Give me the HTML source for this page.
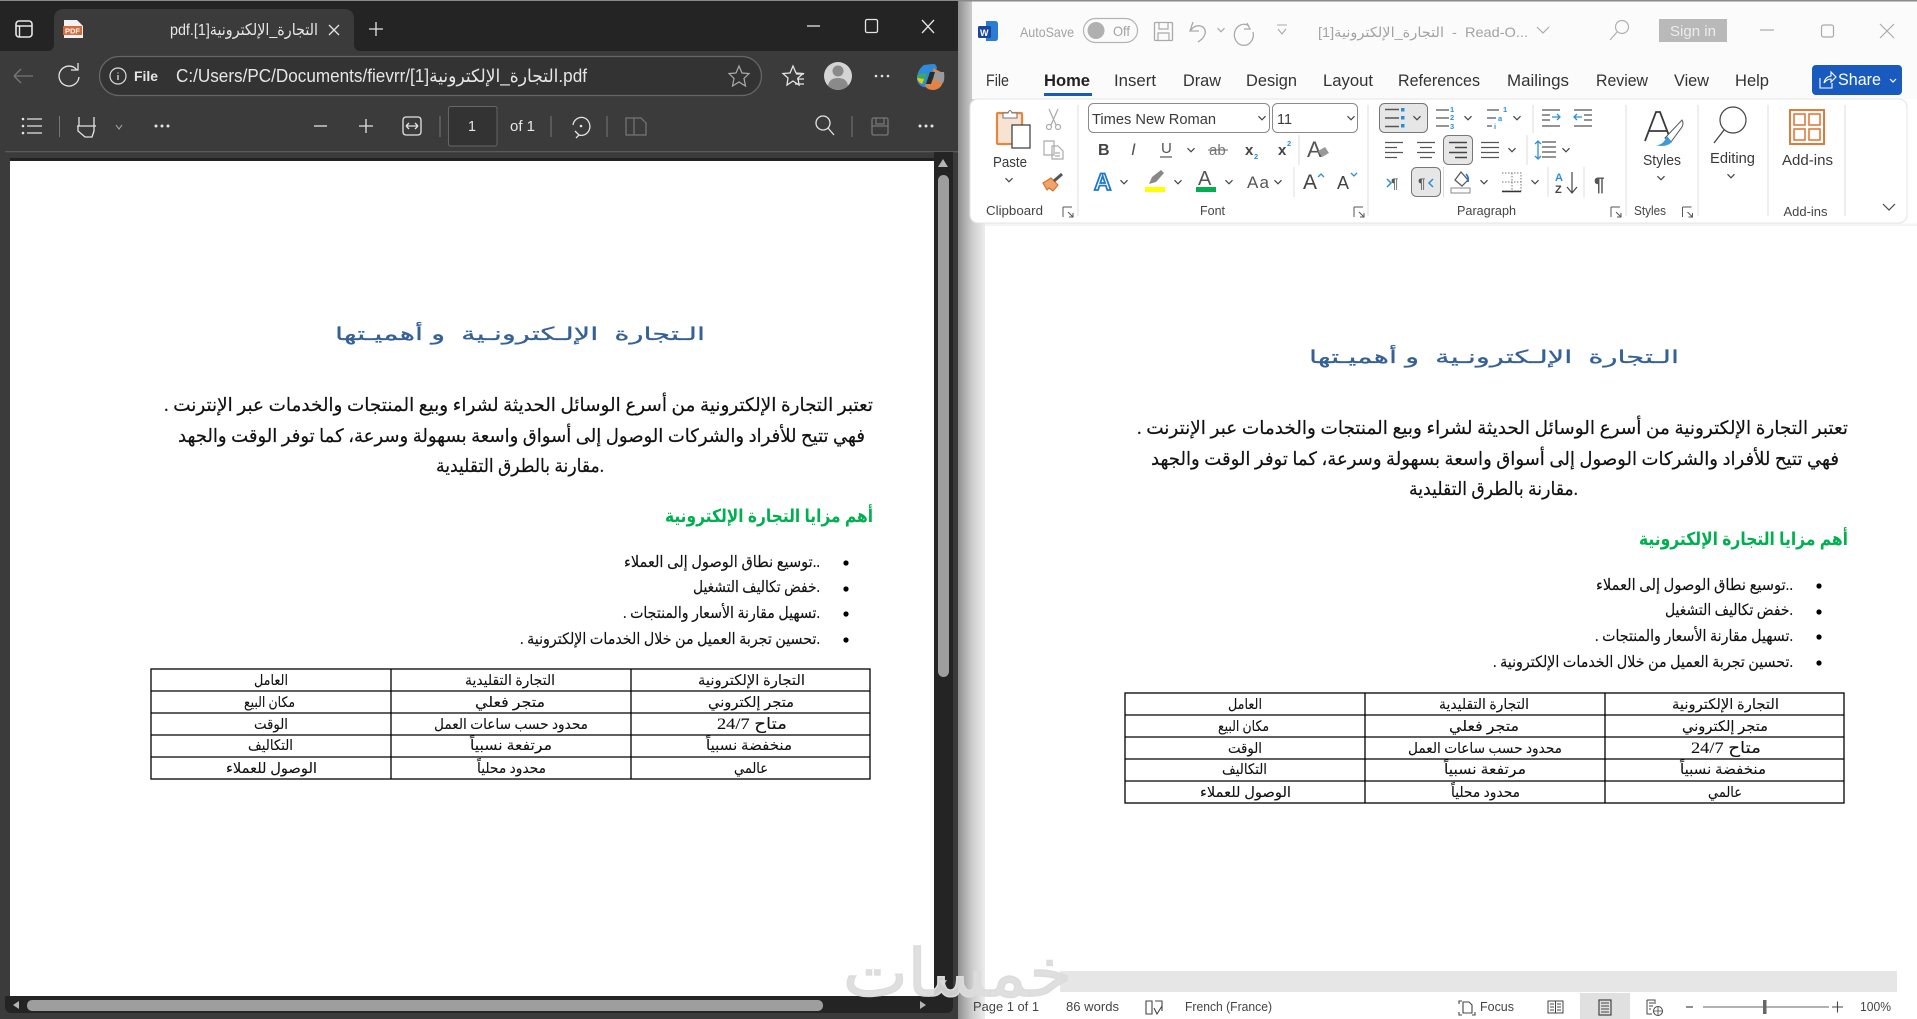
<!DOCTYPE html>
<html lang="en"><head><meta charset="utf-8"><title>PDF and Word</title>
<style>
html,body{margin:0;padding:0;width:1917px;height:1019px;overflow:hidden;background:#fff}
svg{display:block}
text{font-family:"Liberation Sans","DejaVu Sans",sans-serif;white-space:pre}
.d{fill:#e6e6e6;font-size:15px}
.r{fill:#3a3a3a;font-size:15px}
.t{fill:#333;font-size:16.5px}
.s{fill:#444;font-size:13px}
.g{fill:#a3a3a3;font-size:14px}
.b{fill:#111;font-size:18.5px;font-family:"Liberation Serif","DejaVu Sans",sans-serif;stroke:#111;stroke-width:.2}
.i{fill:#111;font-size:15.5px;font-family:"Liberation Serif","DejaVu Sans",sans-serif;stroke:#111;stroke-width:.15}
.c{fill:#111;font-size:14.5px;font-family:"Liberation Serif","DejaVu Sans",sans-serif;stroke:#111;stroke-width:.1}
.h{fill:#00b050;font-size:18px;font-weight:bold}
.ti{fill:#356196;font-size:18px;stroke:#356196;stroke-width:.25}
.ln{stroke:#555;stroke-width:1.2;fill:none}
.ic{stroke:#e4e4e4;stroke-width:1.3;fill:none}
.blue{fill:#2b8fd8;font-size:7.5px;font-weight:bold}
</style></head><body>
<svg xmlns="http://www.w3.org/2000/svg" width="1917" height="1019" viewBox="0 0 1917 1019">
<defs>
<linearGradient id="sh" x1="0" x2="1" y1="0" y2="0"><stop offset="0" stop-color="#8f8f8f"/><stop offset=".25" stop-color="#adadad"/><stop offset=".55" stop-color="#cfcfcf"/><stop offset="1" stop-color="#ececec"/></linearGradient>
<path id="ch" d="M-3.5-1.8L0 1.8L3.5-1.8" fill="none" stroke="#444" stroke-width="1.2"/>
<g id="launch"><path d="M-5-5H4M-5-5V5M0 0L5 5M5 1V5H1" fill="none" stroke="#555" stroke-width="1"/></g>
<g id="al"><path class="ln" d="M-9-7.5H9M-9-2.5H9M-9 2.5H9M-9 7.5H9"/></g>
<g id="all"><path class="ln" d="M-9-7.5H9M-9-2.5H3M-9 2.5H9M-9 7.5H3"/></g>
<g id="alc"><path class="ln" d="M-9-7.5H9M-6-2.5H6M-9 2.5H9M-6 7.5H6"/></g>
<g id="alr"><path d="M-9-7.5H9M-3-2.5H9M-9 2.5H9M-3 7.5H9" fill="none" stroke="#444" stroke-width="1.6"/></g>
</defs>

<!-- ======= backdrop ======= -->
<rect width="1917" height="1019" fill="#fff"/>
<rect x="958" y="0" width="959" height="99" fill="#fbfbfb"/>
<rect x="958" y="0" width="27" height="1019" fill="url(#sh)"/>
<rect x="972" y="0" width="945" height="99" fill="#fbfbfb"/>
<rect x="0" y="0" width="1917" height="1.5" fill="#8a8a8a"/>

<!-- ======= PDF WINDOW ======= -->
<rect x="0" y="1" width="958" height="1018" fill="#3b3b3b"/>
<rect x="0" y="1" width="958" height="50" fill="#242424"/>
<path d="M47 51Q54 51 54 44V19Q54 9 64 9H344Q354 9 354 19V44Q354 51 361 51Z" fill="#3b3b3b"/>
<!-- sidebar icon -->
<rect x="16" y="21" width="16" height="16" rx="3" fill="none" stroke="#e6e6e6" stroke-width="1.6"/>
<path d="M16 26H32M19.5 26V37" stroke="#e6e6e6" stroke-width="1.4" fill="none"/>
<!-- pdf icon -->
<path d="M64 20H77L83 26V38H64Z" fill="#f2f2f2"/>
<rect x="63" y="26" width="19" height="9" fill="#d9693a"/>
<text x="65" y="33.5" font-size="7" font-weight="bold" fill="#fff" textLength="15" lengthAdjust="spacingAndGlyphs">PDF</text>
<text class="d" x="170" y="35" font-size="16" textLength="148" lengthAdjust="spacingAndGlyphs" style="font-size:16px">pdf.[1]التجارة_الإلكترونية</text>
<path class="ic" d="M329 25L339 35M339 25L329 35" stroke-width="1.4"/>
<path class="ic" d="M376 22V36M369 29H383" stroke-width="1.5"/>
<path class="ic" d="M807 26H820"/><rect x="865.5" y="19.500" width="12" height="13" rx="1.5" class="ic"/><path class="ic" d="M922 20L934 33M934 20L922 33"/>

<!-- address row -->
<path d="M14 76H33M14 76L21 69M14 76L21 83" fill="none" stroke="#777" stroke-width="1.3"/>
<path class="ic" d="M77 70A10 10 0 1 0 79 77M78 63V70H71" stroke-width="1.5"/>
<rect x="99.500" y="56.500" width="662" height="39" rx="19.500" fill="#333" stroke="#666" stroke-width="1.3"/>
<circle cx="118" cy="76" r="8" fill="none" stroke="#ddd" stroke-width="1.2"/><path d="M118 72.500V73.500M118 75V80" stroke="#ddd" stroke-width="1.3"/>
<text class="d" x="134" y="81" textLength="24" lengthAdjust="spacingAndGlyphs" font-weight="bold" style="font-size:14px">File</text>
<text class="d" x="176" y="82" textLength="411" lengthAdjust="spacingAndGlyphs" style="font-size:18px">C:/Users/PC/Documents/fievrr/[1]التجارة_الإلكترونية.pdf</text>
<path d="M739 66L742 73L749 73.500L744 78.500L745.500 86L739 82L732.500 86L734 78.500L729 73.500L736 73Z" fill="none" stroke="#aaa" stroke-width="1.2"/>
<path class="ic" d="M793 66L796 73L803 73.500L798 78L799 85L793 81L787 85L788 78L783 73.500L790 73Z"/>
<path d="M796 74H804M797 79H804M795 84H804" stroke="#e4e4e4" stroke-width="1.3"/>
<ellipse cx="838" cy="76" rx="14" ry="14" fill="#d4d4d4"/>
<circle cx="838" cy="71" r="5.500" fill="#8a8a8a"/><path d="M828 86Q829 78 838 78Q847 78 848 86Q843 90 838 90Q833 90 828 86Z" fill="#8a8a8a"/>
<circle cx="876" cy="76" r="1.300" fill="#e4e4e4"/><circle cx="882" cy="76" r="1.300" fill="#e4e4e4"/><circle cx="888" cy="76" r="1.300" fill="#e4e4e4"/>
<!-- copilot -->
<path d="M932 64Q936 63 937 68L930 84Q928 88 923 87Q917 84 917 79Q917 70 924 65Z" fill="#2f8bd8"/>
<path d="M917 76Q920 72 927 74L924 84Q918 84 917 78Z" fill="#3aa76d"/>
<path d="M917 78L924 79L922 84Q918 82 917 78Z" fill="#e8c820"/>
<path d="M933 68L941 72Q945 74 943 82Q941 89 934 90Q926 90 925 85L930 81Q933 81 934 76Z" fill="#e0854a"/>
<path d="M935 72L944 72Q945 80 943 83L933 79Z" fill="#9a9a9a"/>
<path d="M930 72L935 72L931 84L926 84Z" fill="#2a2a2a"/>

<!-- pdf toolbar -->
<g fill="#e4e4e4"><circle cx="23" cy="119" r="1.300"/><circle cx="23" cy="126" r="1.300"/><circle cx="23" cy="133" r="1.300"/></g>
<path class="ic" d="M27 119H42M27 126H42M27 133H42"/>
<path d="M59.500 116V137" stroke="#777"/>
<path class="ic" d="M79 117V126H94V117M77 126H96M78 126V131L85 137H92L94 131V126"/>
<path d="M116 125L119 129L122 125" fill="none" stroke="#aaa" stroke-width="1"/>
<g fill="#e4e4e4"><circle cx="156" cy="126" r="1.500"/><circle cx="162" cy="126" r="1.500"/><circle cx="168" cy="126" r="1.500"/></g>
<path d="M314 126H327" stroke="#ccc" stroke-width="1.500"/>
<path class="ic" d="M366 119V133M359 126H373" stroke-width="1.500"/>
<rect x="403" y="117" width="18" height="18" rx="3" class="ic"/>
<path class="ic" d="M406 126H418M406 126L409 123M406 126L409 129M418 126L415 123M418 126L415 129" stroke-width="1.100"/>
<path d="M440 116V137" stroke="#777"/>
<rect x="448.500" y="106.500" width="48.500" height="39.500" rx="2" fill="#333" stroke="#666"/>
<text class="d" x="468" y="131" textLength="8" lengthAdjust="spacingAndGlyphs">1</text>
<text class="d" x="510" y="131" textLength="25" lengthAdjust="spacingAndGlyphs">of 1</text>
<path d="M551 116V137" stroke="#777"/>
<path class="ic" d="M573 125A8.500 9 0 1 1 579 135L575 131M579 135L576 138" stroke-width="1.400"/><circle cx="581" cy="126" r="1.300" fill="#e4e4e4"/>
<path d="M607 116V137" stroke="#777"/>
<path d="M626 118H634V135H626ZM634 118H641L646 123V135H634Z" fill="none" stroke="#777" stroke-width="1.200"/>
<circle cx="823" cy="123" r="7" class="ic" stroke-width="1.500"/><path class="ic" d="M828 128L834 135" stroke-width="1.500"/>
<path d="M852 116V137" stroke="#777"/>
<rect x="872" y="118" width="16" height="17" rx="1.500" fill="none" stroke="#777" stroke-width="1.300"/><path d="M872 126H888M876 118V124H884V118" fill="none" stroke="#777" stroke-width="1.200"/>
<g fill="#e4e4e4"><circle cx="920" cy="126" r="1.500"/><circle cx="926" cy="126" r="1.500"/><circle cx="932" cy="126" r="1.500"/></g>
<rect x="5" y="151" width="953" height="1.300" fill="#5a5a5a"/>

<!-- pdf viewport -->
<rect x="10" y="158" width="925" height="3" fill="#222"/>
<rect x="10" y="161" width="924" height="835" fill="#fff"/>
<rect x="934" y="152" width="19" height="844" fill="#242424"/>
<path d="M943 159L948 167H938Z" fill="#b5b5b5"/>
<rect x="938" y="175" width="11" height="502" rx="5.500" fill="#9e9e9e"/>
<path d="M939 980H947L943 987Z" fill="#b5b5b5"/>
<path d="M5 996H953V1006Q953 1013 946 1013H12Q5 1013 5 1006Z" fill="#242424"/>
<path d="M13 1005L19 1001V1009Z" fill="#b5b5b5"/>
<rect x="27" y="1000" width="796" height="11" rx="5" fill="#9e9e9e"/>
<path d="M920 1001L926 1005L920 1009Z" fill="#b5b5b5"/>

<!-- PDF DOC -->
<text class="ti" x="335" y="340" textLength="370" lengthAdjust="spacingAndGlyphs">الـتجارة  الإلـكترونـية  و أهميـتها</text>
<text class="b" x="164" y="411" textLength="709" lengthAdjust="spacingAndGlyphs">. تعتبر التجارة الإلكترونية من أسرع الوسائل الحديثة لشراء وبيع المنتجات والخدمات عبر الإنترنت</text>
<text class="b" x="178" y="442" textLength="687" lengthAdjust="spacingAndGlyphs">فهي تتيح للأفراد والشركات الوصول إلى أسواق واسعة بسهولة وسرعة، كما توفر الوقت والجهد</text>
<text class="b" x="436" y="472" textLength="168" lengthAdjust="spacingAndGlyphs">مقارنة بالطرق التقليدية.</text>
<text class="h" x="665" y="522" textLength="208" lengthAdjust="spacingAndGlyphs">أهم مزايا التجارة الإلكترونية</text>
<g fill="#000"><circle cx="846" cy="563" r="2.600"/><circle cx="846" cy="589" r="2.600"/><circle cx="846" cy="614" r="2.600"/><circle cx="846" cy="640" r="2.600"/></g>
<text class="i" x="624" y="567" textLength="196" lengthAdjust="spacingAndGlyphs">توسيع نطاق الوصول إلى العملاء..</text>
<text class="i" x="693" y="592" textLength="127" lengthAdjust="spacingAndGlyphs">خفض تكاليف التشغيل.</text>
<text class="i" x="623" y="618" textLength="197" lengthAdjust="spacingAndGlyphs">. تسهيل مقارنة الأسعار والمنتجات.</text>
<text class="i" x="520" y="644" textLength="300" lengthAdjust="spacingAndGlyphs">. تحسين تجربة العميل من خلال الخدمات الإلكترونية.</text>
<g stroke="#000" stroke-width="1.300" fill="none"><rect x="151" y="669" width="719" height="110"/><path d="M391 669V779M631 669V779M151 691H870M151 713H870M151 735H870M151 757H870"/></g>
<text class="c" x="254" y="685" textLength="34" lengthAdjust="spacingAndGlyphs">العامل</text>
<text class="c" x="465" y="685" textLength="90" lengthAdjust="spacingAndGlyphs">التجارة التقليدية</text>
<text class="c" x="698" y="685" textLength="107" lengthAdjust="spacingAndGlyphs">التجارة الإلكترونية</text>
<text class="c" x="244" y="707" textLength="51" lengthAdjust="spacingAndGlyphs">مكان البيع</text>
<text class="c" x="475" y="707" textLength="70" lengthAdjust="spacingAndGlyphs">متجر فعلي</text>
<text class="c" x="708" y="707" textLength="86" lengthAdjust="spacingAndGlyphs">متجر إلكتروني</text>
<text class="c" x="254" y="729" textLength="34" lengthAdjust="spacingAndGlyphs">الوقت</text>
<text class="c" x="434" y="729" textLength="154" lengthAdjust="spacingAndGlyphs">محدود حسب ساعات العمل</text>
<text class="c" x="717" y="729" textLength="70" lengthAdjust="spacingAndGlyphs" style="font-size:16px">24/7 متاح</text>
<text class="c" x="248" y="750" textLength="45" lengthAdjust="spacingAndGlyphs">التكاليف</text>
<text class="c" x="470" y="750" textLength="82" lengthAdjust="spacingAndGlyphs">مرتفعة نسبياً</text>
<text class="c" x="706" y="750" textLength="86" lengthAdjust="spacingAndGlyphs">منخفضة نسبياً</text>
<text class="c" x="226" y="773" textLength="91" lengthAdjust="spacingAndGlyphs">الوصول للعملاء</text>
<text class="c" x="477" y="773" textLength="69" lengthAdjust="spacingAndGlyphs">محدود محلياً</text>
<text class="c" x="734" y="773" textLength="34" lengthAdjust="spacingAndGlyphs">عالمي</text>

<!-- ======= WORD ======= -->
<!-- title bar -->
<path d="M986 21H995Q998 21 998 24V38Q998 41 995 41H986Z" fill="#2b7cd3"/>
<rect x="978" y="26" width="13" height="12" rx="1.500" fill="#18479b"/>
<text x="980" y="36" font-size="9" font-weight="bold" fill="#fff">W</text>
<text class="g" x="1020" y="37" textLength="54" lengthAdjust="spacingAndGlyphs">AutoSave</text>
<rect x="1083.500" y="18.500" width="54" height="24" rx="12" fill="none" stroke="#b4b4b4" stroke-width="1.200"/>
<circle cx="1096" cy="30.500" r="8.500" fill="#b0b0b0"/>
<text class="g" x="1113" y="36" textLength="17" lengthAdjust="spacingAndGlyphs" fill="#bbb">Off</text>
<rect x="1154.500" y="22.500" width="18" height="18" rx="1" fill="none" stroke="#aaa" stroke-width="1.300"/><path d="M1159 23V29H1168V23M1158 41V33H1169V41" fill="none" stroke="#aaa" stroke-width="1.200"/>
<path d="M1193 22L1190 31H1199M1190 31Q1196 23 1203 27Q1208 32 1202 39L1198 42" fill="none" stroke="#aaa" stroke-width="1.300"/>
<g transform="translate(1221,30)"><use href="#ch" opacity=".45"/></g>
<path d="M1249 22L1252 28L1246 28M1251 25A9.500 10.500 0 1 0 1255 31" fill="none" stroke="#aaa" stroke-width="1.300" transform="translate(-2,1)"/>
<path d="M1277 25H1287M1278 29L1282 34L1286 29" fill="none" stroke="#aaa" stroke-width="1.100"/>
<text class="g" x="1318" y="37" textLength="210" lengthAdjust="spacingAndGlyphs">[1]التجارة_الإلكترونية  -  Read-O...</text>
<g transform="translate(1543,30)"><path d="M-6-3L0 3L6-3" fill="none" stroke="#aaa" stroke-width="1.200"/></g>
<circle cx="1622" cy="27" r="6.500" fill="none" stroke="#b0b0b0" stroke-width="1.200"/><path d="M1617 32L1610 40" stroke="#b0b0b0" stroke-width="1.200"/>
<rect x="1659" y="19" width="68" height="23" fill="#b9b9b9"/>
<text x="1670" y="36" font-size="15" fill="#ececec" textLength="46" lengthAdjust="spacingAndGlyphs">Sign in</text>
<path d="M1760 30H1774" stroke="#aaa" stroke-width="1.200"/><rect x="1821.500" y="25" width="12" height="12" rx="2" fill="none" stroke="#aaa" stroke-width="1.200"/><path d="M1880 24L1894 38M1894 24L1880 38" stroke="#aaa" stroke-width="1.200"/>

<!-- tabs -->
<text class="t" x="986" y="86" textLength="23" lengthAdjust="spacingAndGlyphs">File</text>
<text class="t" x="1044" y="86" textLength="46" lengthAdjust="spacingAndGlyphs" font-weight="bold" style="fill:#222">Home</text>
<rect x="1044" y="93" width="48" height="3" fill="#185abd"/>
<text class="t" x="1114" y="86" textLength="42" lengthAdjust="spacingAndGlyphs">Insert</text>
<text class="t" x="1183" y="86" textLength="38" lengthAdjust="spacingAndGlyphs">Draw</text>
<text class="t" x="1246" y="86" textLength="51" lengthAdjust="spacingAndGlyphs">Design</text>
<text class="t" x="1323" y="86" textLength="50" lengthAdjust="spacingAndGlyphs">Layout</text>
<text class="t" x="1398" y="86" textLength="82" lengthAdjust="spacingAndGlyphs">References</text>
<text class="t" x="1507" y="86" textLength="62" lengthAdjust="spacingAndGlyphs">Mailings</text>
<text class="t" x="1596" y="86" textLength="52" lengthAdjust="spacingAndGlyphs">Review</text>
<text class="t" x="1674" y="86" textLength="35" lengthAdjust="spacingAndGlyphs">View</text>
<text class="t" x="1735" y="86" textLength="34" lengthAdjust="spacingAndGlyphs">Help</text>
<rect x="1812" y="65" width="90" height="30" rx="4" fill="#185abd"/>
<path d="M1820 78V88H1832V83M1824 83Q1825 77 1831 76V72L1836 77L1831 82V79Q1827 79 1824 83Z" fill="none" stroke="#fff" stroke-width="1.100"/>
<text x="1838" y="85" font-size="16.500" fill="#fff" textLength="43" lengthAdjust="spacingAndGlyphs">Share</text>
<path d="M1890 79L1893 82L1896 79" fill="none" stroke="#fff" stroke-width="1.200"/>

<!-- ribbon -->
<rect x="970" y="99" width="937" height="124" rx="8" fill="#fff" stroke="#e4e4e4"/>
<rect x="985" y="223.500" width="932" height="2.500" fill="#f4f4f4"/>
<!-- group separators -->
<path d="M1078 105V216M1368 105V216M1626 105V216M1698 105V216M1768 105V216M1845 105V216" stroke="#dcdcdc"/>
<!-- clipboard -->
<rect x="997" y="113" width="25" height="31" rx="1" fill="#f7e3d2" stroke="#e2873f" stroke-width="2.200"/>
<path d="M1003 113H1008Q1010 108 1012 113H1017V118H1003Z" fill="#fff" stroke="#777" stroke-width="1.100"/>
<rect x="1012" y="125" width="18" height="23" fill="#fff" stroke="#444" stroke-width="1.300"/>
<text class="r" x="993" y="167" textLength="34" lengthAdjust="spacingAndGlyphs">Paste</text>
<use href="#ch" x="1009" y="180"/>
<g fill="none" stroke="#aaa" stroke-width="1.200"><path d="M1049 109L1056 125M1058 109L1051 125"/><circle cx="1049" cy="127" r="2.500"/><circle cx="1058" cy="127" r="2.500"/>
<path d="M1044 141H1054V155H1044ZM1052 146H1058L1063 151V159H1052ZM1055 153H1060M1055 156H1060"/></g>
<path d="M1043 183L1051 178L1058 185L1053 191L1049 188L1047 190Z" fill="#f0a46a" stroke="#d86c26" stroke-width="1.100"/><path d="M1054 181L1062 174" stroke="#555" stroke-width="3"/>
<text class="s" x="986" y="215" textLength="57" lengthAdjust="spacingAndGlyphs">Clipboard</text>
<use href="#launch" x="1068" y="212"/>

<!-- font -->
<rect x="1088.500" y="103.500" width="181" height="29" rx="5" fill="#fff" stroke="#8a8a8a"/>
<rect x="1272.500" y="103.500" width="85" height="29" rx="5" fill="#fff" stroke="#8a8a8a"/>
<text class="r" x="1092" y="124" textLength="124" lengthAdjust="spacingAndGlyphs">Times New Roman</text>
<text class="r" x="1277" y="124" textLength="15" lengthAdjust="spacingAndGlyphs">11</text>
<use href="#ch" x="1262" y="118"/><use href="#ch" x="1351" y="118"/>
<text x="1098" y="155" font-size="16" font-weight="bold" fill="#444">B</text>
<text x="1131" y="155" font-size="17" font-style="italic" fill="#555" font-family="Liberation Serif">I</text>
<text x="1161" y="153" font-size="15" fill="#555">U</text><path d="M1160 157H1172" stroke="#555" stroke-width="1.200"/>
<use href="#ch" x="1191" y="150"/>
<text x="1209" y="155" font-size="15" fill="#777">ab</text><path d="M1208 150H1228" stroke="#666" stroke-width="1.100"/>
<text x="1245" y="155" font-size="15" font-weight="bold" fill="#444">x</text><text class="blue" x="1254" y="159" font-size="8">2</text>
<text x="1278" y="155" font-size="15" font-weight="bold" fill="#444">x</text><text class="blue" x="1287" y="146" font-size="8">2</text>
<path d="M1299 135V165" stroke="#dcdcdc"/>
<text x="1307" y="157" font-size="22" fill="#555">A</text><path d="M1318 151L1325 147L1329 153L1322 157Z" fill="#999"/>
<text x="1094" y="190" font-size="24" font-weight="bold" fill="#fff" stroke="#1f78c8" stroke-width="1.800">A</text>
<use href="#ch" x="1124" y="182"/>
<path d="M1149 184L1152 177L1161 170L1164 173L1156 182Z" fill="#888"/><rect x="1145" y="187" width="20" height="5" fill="#ffff00"/>
<use href="#ch" x="1178" y="182"/>
<text x="1198" y="185" font-size="20" fill="#555">A</text><rect x="1196" y="187" width="20" height="5" fill="#00b050"/>
<use href="#ch" x="1229" y="182"/>
<text x="1247" y="188" font-size="17" fill="#555" textLength="22" lengthAdjust="spacing">Aa</text>
<use href="#ch" x="1278" y="182"/>
<path d="M1294 167V197" stroke="#dcdcdc"/>
<text x="1303" y="189" font-size="21" fill="#444">A</text><path d="M1318 177L1321 174L1324 177" fill="none" stroke="#2b8fd8" stroke-width="1.300"/>
<text x="1337" y="189" font-size="18" fill="#444">A</text><path d="M1351 173L1354 176L1357 173" fill="none" stroke="#2b8fd8" stroke-width="1.300"/>
<text class="s" x="1200" y="215" textLength="25" lengthAdjust="spacingAndGlyphs">Font</text>
<use href="#launch" x="1359" y="212"/>

<!-- paragraph -->
<rect x="1379.500" y="103.500" width="48" height="29" rx="5" fill="#e6e6e6" stroke="#777"/>
<path d="M1385 109.500H1399M1385 118H1399M1385 126.500H1399" stroke="#555" stroke-width="1.400"/>
<rect x="1401" y="108" width="3.500" height="3.500" fill="#2b8fd8"/><rect x="1401" y="116" width="3.500" height="3.500" fill="#2b8fd8"/><rect x="1401" y="124" width="3.500" height="3.500" fill="#2b8fd8"/>
<use href="#ch" x="1417" y="118"/>
<path class="ln" d="M1436 110H1449M1436 118H1449M1436 126H1449"/>
<text class="blue" x="1450" y="112">1</text><text class="blue" x="1450" y="120">2</text><text class="blue" x="1450" y="129">3</text>
<use href="#ch" x="1468" y="118"/>
<path class="ln" d="M1487 110H1499M1487 118H1496M1487 126H1492"/>
<text class="blue" x="1503" y="112">1</text><text class="blue" x="1498" y="121">a</text><text class="blue" x="1494" y="129">i</text>
<use href="#ch" x="1517" y="118"/>
<path d="M1533 105V133" stroke="#dcdcdc"/>
<path class="ln" d="M1542 110H1560M1542 115H1550M1542 120H1550M1542 126H1560"/><path d="M1552 117H1560M1557 114L1560 117L1557 120" fill="none" stroke="#2b8fd8" stroke-width="1.300"/>
<path class="ln" d="M1574 110H1592M1584 115H1592M1584 120H1592M1574 126H1592"/><path d="M1574 117H1582M1577 114L1574 117L1577 120" fill="none" stroke="#2b8fd8" stroke-width="1.300"/>
<use href="#all" x="1394" y="150"/><use href="#alc" x="1426" y="150"/>
<rect x="1443.500" y="135.500" width="29" height="29" rx="5" fill="#e6e6e6" stroke="#777"/><use href="#alr" x="1458" y="150"/>
<use href="#al" x="1490" y="150"/><use href="#ch" x="1512" y="150"/>
<path d="M1527 135V165" stroke="#dcdcdc"/>
<path class="ln" d="M1542 142H1556M1542 147H1556M1542 152H1556M1542 157H1556"/>
<path d="M1538 141V159M1535 144L1538 141L1541 144M1535 156L1538 159L1541 156" fill="none" stroke="#2b8fd8" stroke-width="1.300"/>
<use href="#ch" x="1566" y="150"/>
<text x="1391" y="188" font-size="14" fill="#555">¶</text><path d="M1387 179L1391 183L1387 187" fill="none" stroke="#2b8fd8" stroke-width="1.500"/>
<rect x="1411.500" y="167.500" width="29" height="29" rx="5" fill="#e6e6e6" stroke="#777"/>
<text x="1418" y="188" font-size="14" fill="#555">¶</text><path d="M1433 179L1429 183L1433 187" fill="none" stroke="#2b8fd8" stroke-width="1.500"/>
<path d="M1443.500 167V197" stroke="#dcdcdc"/>
<path d="M1455 180L1461 172L1468 180L1462 186Z" fill="none" stroke="#555" stroke-width="1.200"/><path d="M1466 174Q1469 177 1468 182" fill="none" stroke="#2b78c8" stroke-width="1.800"/>
<rect x="1451" y="188" width="19" height="5" fill="#fff" stroke="#888"/>
<use href="#ch" x="1484" y="182"/>
<path d="M1502 173H1521V191H1502M1502 182H1521M1512 173V191" fill="none" stroke="#777" stroke-width="1" stroke-dasharray="1.500 1.500"/><path d="M1502 191.500H1521" stroke="#333" stroke-width="1.400"/>
<use href="#ch" x="1535" y="182"/>
<path d="M1548 167V197" stroke="#dcdcdc"/>
<text x="1555" y="181" font-size="11" font-weight="bold" fill="#2b8fd8">A</text><text x="1555" y="193" font-size="11" font-weight="bold" fill="#444">Z</text>
<path d="M1572 172V193M1567 187L1572 193L1577 187" fill="none" stroke="#444" stroke-width="1.200"/>
<path d="M1584 167V197" stroke="#dcdcdc"/>
<text x="1594" y="191" font-size="19" font-weight="bold" fill="#555">¶</text>
<text class="s" x="1457" y="215" textLength="59" lengthAdjust="spacingAndGlyphs">Paragraph</text>
<use href="#launch" x="1616" y="212"/>
<!-- styles -->
<path d="M1645 141L1656 112H1660L1671 141M1649 131H1667" fill="none" stroke="#3a3a3a" stroke-width="1.800"/>
<path d="M1665 138L1682 120Q1684 123 1682 127L1671 142Z" fill="#fff" stroke="#555"/><path d="M1655 145Q1663 146 1667 136L1672 142Q1666 148 1655 145Z" fill="#3f9ad8"/>
<text class="r" x="1643" y="165" textLength="38" lengthAdjust="spacingAndGlyphs">Styles</text>
<use href="#ch" x="1661" y="178"/>
<text class="s" x="1634" y="215" textLength="32" lengthAdjust="spacingAndGlyphs">Styles</text>
<use href="#launch" x="1687.500" y="212"/>
<!-- editing -->
<circle cx="1733" cy="120" r="13" fill="none" stroke="#444" stroke-width="1.200"/><path d="M1724 130L1714 143" stroke="#444" stroke-width="1.300"/>
<text class="r" x="1710" y="163" textLength="45" lengthAdjust="spacingAndGlyphs">Editing</text>
<use href="#ch" x="1731" y="176"/>
<!-- add-ins -->
<rect x="1790" y="110" width="34" height="34" fill="none" stroke="#e07b3c" stroke-width="2"/>
<rect x="1794" y="114" width="11" height="11" fill="none" stroke="#e07b3c" stroke-width="1.600"/><rect x="1809" y="114" width="11" height="11" fill="none" stroke="#e07b3c" stroke-width="1.600"/><rect x="1794" y="129" width="11" height="11" fill="none" stroke="#e07b3c" stroke-width="1.600"/><rect x="1809" y="129" width="11" height="11" fill="none" stroke="#e07b3c" stroke-width="1.600"/>
<text class="r" x="1782" y="165" textLength="51" lengthAdjust="spacingAndGlyphs">Add-ins</text>
<text class="s" x="1783.500" y="216" textLength="44" lengthAdjust="spacingAndGlyphs">Add-ins</text>
<path d="M1883 204L1889 210L1895 204" fill="none" stroke="#444" stroke-width="1.200"/>

<!-- WORD DOC -->
<text class="ti" x="1309" y="363" textLength="370" lengthAdjust="spacingAndGlyphs">الـتجارة  الإلـكترونـية  و أهميـتها</text>
<text class="b" x="1137" y="434" textLength="711" lengthAdjust="spacingAndGlyphs">. تعتبر التجارة الإلكترونية من أسرع الوسائل الحديثة لشراء وبيع المنتجات والخدمات عبر الإنترنت</text>
<text class="b" x="1151" y="465" textLength="688" lengthAdjust="spacingAndGlyphs">فهي تتيح للأفراد والشركات الوصول إلى أسواق واسعة بسهولة وسرعة، كما توفر الوقت والجهد</text>
<text class="b" x="1409" y="495" textLength="169" lengthAdjust="spacingAndGlyphs">مقارنة بالطرق التقليدية.</text>
<text class="h" x="1639" y="545" textLength="209" lengthAdjust="spacingAndGlyphs">أهم مزايا التجارة الإلكترونية</text>
<g fill="#000"><circle cx="1819" cy="586" r="2.600"/><circle cx="1819" cy="612" r="2.600"/><circle cx="1819" cy="637" r="2.600"/><circle cx="1819" cy="663" r="2.600"/></g>
<text class="i" x="1596" y="590" textLength="197" lengthAdjust="spacingAndGlyphs">توسيع نطاق الوصول إلى العملاء..</text>
<text class="i" x="1665" y="615" textLength="128" lengthAdjust="spacingAndGlyphs">خفض تكاليف التشغيل.</text>
<text class="i" x="1595" y="641" textLength="198" lengthAdjust="spacingAndGlyphs">. تسهيل مقارنة الأسعار والمنتجات.</text>
<text class="i" x="1493" y="667" textLength="300" lengthAdjust="spacingAndGlyphs">. تحسين تجربة العميل من خلال الخدمات الإلكترونية.</text>
<g stroke="#000" stroke-width="1.300" fill="none"><rect x="1125" y="693" width="719" height="110"/><path d="M1365 693V803M1605 693V803M1125 715H1844M1125 737H1844M1125 759H1844M1125 781H1844"/></g>
<text class="c" x="1228" y="709" textLength="34" lengthAdjust="spacingAndGlyphs">العامل</text>
<text class="c" x="1439" y="709" textLength="90" lengthAdjust="spacingAndGlyphs">التجارة التقليدية</text>
<text class="c" x="1672" y="709" textLength="107" lengthAdjust="spacingAndGlyphs">التجارة الإلكترونية</text>
<text class="c" x="1218" y="731" textLength="51" lengthAdjust="spacingAndGlyphs">مكان البيع</text>
<text class="c" x="1449" y="731" textLength="70" lengthAdjust="spacingAndGlyphs">متجر فعلي</text>
<text class="c" x="1682" y="731" textLength="86" lengthAdjust="spacingAndGlyphs">متجر إلكتروني</text>
<text class="c" x="1228" y="753" textLength="34" lengthAdjust="spacingAndGlyphs">الوقت</text>
<text class="c" x="1408" y="753" textLength="154" lengthAdjust="spacingAndGlyphs">محدود حسب ساعات العمل</text>
<text class="c" x="1691" y="753" textLength="70" lengthAdjust="spacingAndGlyphs" style="font-size:16px">24/7 متاح</text>
<text class="c" x="1222" y="774" textLength="45" lengthAdjust="spacingAndGlyphs">التكاليف</text>
<text class="c" x="1444" y="774" textLength="82" lengthAdjust="spacingAndGlyphs">مرتفعة نسبياً</text>
<text class="c" x="1680" y="774" textLength="86" lengthAdjust="spacingAndGlyphs">منخفضة نسبياً</text>
<text class="c" x="1200" y="797" textLength="91" lengthAdjust="spacingAndGlyphs">الوصول للعملاء</text>
<text class="c" x="1451" y="797" textLength="69" lengthAdjust="spacingAndGlyphs">محدود محلياً</text>
<text class="c" x="1708" y="797" textLength="34" lengthAdjust="spacingAndGlyphs">عالمي</text>

<!-- word scrollbar & status -->
<rect x="1060" y="971" width="837" height="21" fill="#e6e6e6"/>
<text class="s" x="973" y="1011" textLength="66" lengthAdjust="spacingAndGlyphs">Page 1 of 1</text>
<text class="s" x="1066" y="1011" textLength="53" lengthAdjust="spacingAndGlyphs">86 words</text>
<path d="M1146 1001H1152V1014H1146ZM1155 1001H1162V1011M1154 1008L1157 1014L1162 1006" fill="none" stroke="#444" stroke-width="1.100"/>
<text class="s" x="1185" y="1011" textLength="87" lengthAdjust="spacingAndGlyphs">French (France)</text>
<path d="M1462 1001H1459V1004M1459 1012V1015H1462M1472 1015H1475V1012" fill="none" stroke="#444" stroke-width="1.100"/><path d="M1463 1002H1469L1472 1005V1013H1463Z" fill="none" stroke="#444" stroke-width="1.100"/>
<text class="s" x="1480" y="1011" textLength="34" lengthAdjust="spacingAndGlyphs">Focus</text>
<path d="M1548 1001H1563V1013H1548ZM1555.500 1001V1013M1550 1004H1554M1550 1007H1554M1550 1010H1554M1557 1004H1561M1557 1007H1561M1557 1010H1561" fill="none" stroke="#444" stroke-width="1"/>
<rect x="1580" y="993" width="50" height="26" fill="#e0e0e0"/>
<rect x="1599" y="1000" width="12" height="15" fill="none" stroke="#444" stroke-width="1.200"/><path d="M1601 1003H1609M1601 1006H1609M1601 1009H1609M1601 1012H1609" stroke="#444"/>
<path d="M1647 1000H1655V1004M1647 1000V1014H1652M1649 1003H1654M1649 1006H1653M1649 1009H1651" fill="none" stroke="#444"/><circle cx="1658" cy="1011" r="4.500" fill="#fff" stroke="#444"/><path d="M1653.500 1011H1662.500M1658 1006.500V1015.500" stroke="#444" stroke-width=".8"/>
<path d="M1686 1007H1693" stroke="#444" stroke-width="1.200"/>
<path d="M1703 1007H1829" stroke="#666"/>
<rect x="1763" y="1000" width="3.500" height="14" fill="#666"/>
<path d="M1832 1007H1843M1837.500 1001.500V1012.500" stroke="#444" stroke-width="1.100"/>
<text class="s" x="1860" y="1011" textLength="31" lengthAdjust="spacingAndGlyphs">100%</text>

<!-- watermark -->
<text x="843" y="996" font-size="66" fill="#dcdcdc" fill-opacity=".92" stroke="#dcdcdc" stroke-width="1.500" textLength="229" lengthAdjust="spacingAndGlyphs" style="font-family:'DejaVu Sans',sans-serif">خمسات</text>
</svg>
</body></html>
